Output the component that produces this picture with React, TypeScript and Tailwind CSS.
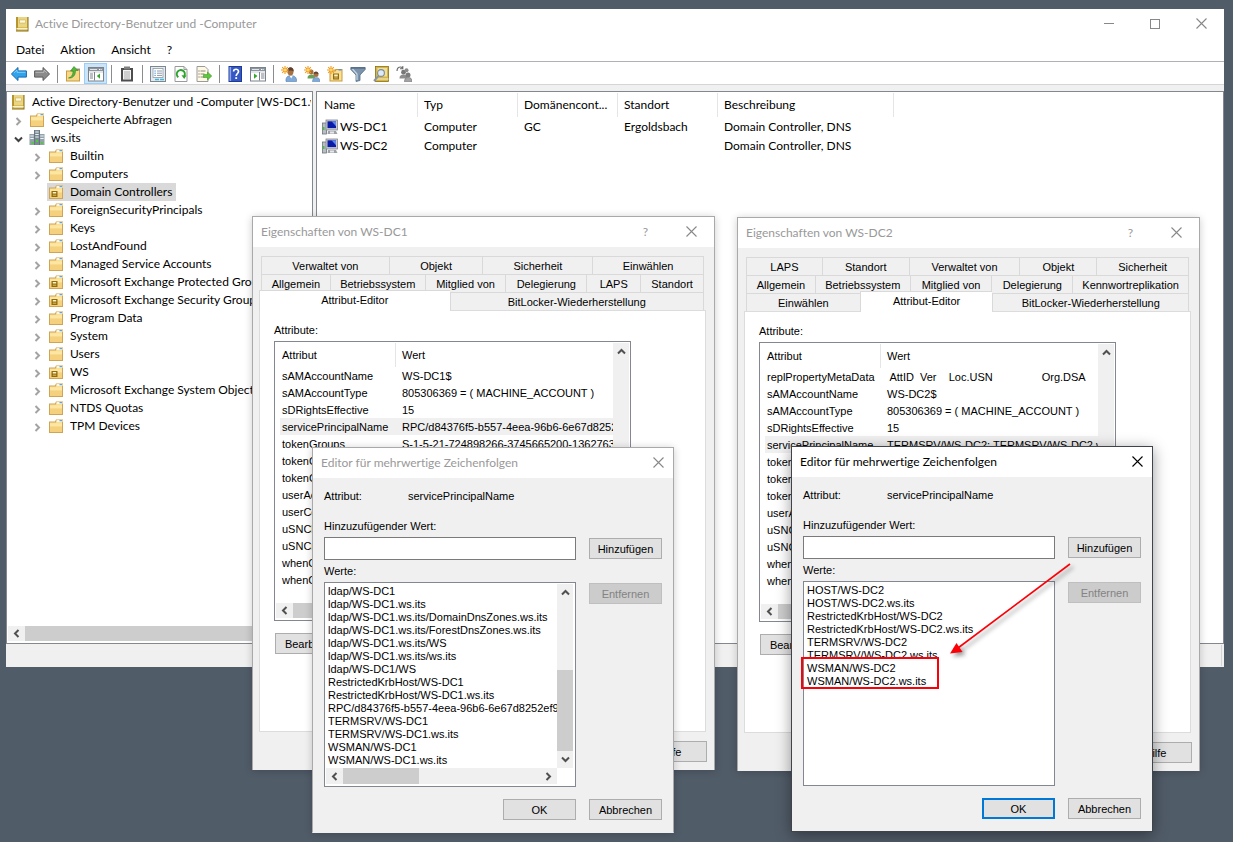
import type { ReactNode } from 'react';

/* ---------- icons ---------- */

function Svg({ children, size = 16 }: { children: ReactNode; size?: number }) {
  return (
    <svg width={size} height={size} viewBox="0 0 16 16" className="shrink-0" aria-hidden="true">
      {children}
    </svg>
  );
}

const BookIcon = () => (
  <Svg>
    <rect x="2" y="1" width="12.500" height="14.500" fill="#8a6d14" />
    <rect x="2" y="1" width="11.500" height="13.500" fill="#d9bd55" />
    <rect x="2" y="1" width="2" height="13.500" fill="#b6952e" />
    <rect x="4" y="1" width="9" height="10" fill="#e9d584" />
    <rect x="5.500" y="4" width="6" height="3" fill="#fdf8e0" stroke="#c9a83f" strokeWidth=".5" />
    <rect x="2.500" y="12" width="11" height="1.400" fill="#f7f1d4" />
  </Svg>
);

const FolderIcon = ({ ou = false }: { ou?: boolean }) => (
  <Svg>
    <path d="M1 3.500h6l1-2h7v13.500H1z" fill="#cfa454" />
    <path d="M2 4.500h6l1-2h5v11.500H2z" fill="#fbdf92" />
    <path d="M8.500 2h6v2h-6z" fill="#fff6d8" />
    <path d="M11.500 2.200h2.500v1h-2.500z" fill="#3f8fe0" />
    <path d="M2 5.500h12v3H2z" fill="#fde6a4" />
    <path d="M2 8.500h12V14H2z" fill="#f5d17e" />
    {ou && (
      <>
        <rect x="3.500" y="7" width="6" height="6" fill="#8f6c10" />
        <rect x="4.800" y="8" width="3.400" height="1.500" fill="#fff3c4" />
        <rect x="4.800" y="10.500" width="3.400" height="1.500" fill="#c9a640" />
      </>
    )}
  </Svg>
);

const DomainIcon = () => (
  <Svg>
    <path d="M5.500 0h5v15h-5z" fill="#7b8a94" />
    <path d="M.5 4h5v11h-5zM10.500 4h5v11h-5z" fill="#93a1aa" />
    <path d="M6.300 2h3.400M6.300 4.500h3.400M1.300 6h3.400M1.300 8.500h3.400M11.300 6h3.400M11.300 8.500h3.400M6.300 7h3.400" stroke="#eef3f5" strokeWidth="1.100" />
    <path d="M5.500 0v15M10.500 0v15" stroke="#55636d" strokeWidth=".8" />
    <path d="M2.500 12h2v2h-2zM7 10h2v2H7zM12 12h2v2h-2z" fill="#45d32c" />
  </Svg>
);

const ComputerIcon = () => (
  <Svg>
    <rect x="0.500" y="4" width="4" height="11" fill="#b9bec4" stroke="#6e747b" strokeWidth=".8" />
    <rect x="1" y="8" width="1.500" height="3" fill="#45c03a" />
    <rect x="4" y="1" width="11.500" height="10" fill="#c9cbd0" stroke="#83868c" strokeWidth=".8" />
    <rect x="5.500" y="2.300" width="8.500" height="6.800" fill="#0a1ba8" />
    <path d="M9.500 2.300h4.500v5z" fill="#5f86ea" />
    <path d="M6 12h8l1.500 3h-10z" fill="#9ea2a8" />
    <path d="M8 12.500h4v2H8z" fill="#e6e8ea" />
  </Svg>
);

const ArrowIcon = ({ forward = false }: { forward?: boolean }) =>
  forward ? (
    <Svg>
      <path d="M15.600 8 9 1.500v3.400H.6v6.200H9v3.400z" fill="#8a8a8a" stroke="#5a5a5a" />
      <path d="M1.500 6.300h8.500V4l3 2.800" fill="none" stroke="#bdbdbd" strokeWidth=".9" />
    </Svg>
  ) : (
    <Svg>
      <path d="M.4 8 7 1.500v3.400h8.400v6.200H7v3.400z" fill="#2fa4ec" stroke="#1668b0" />
      <path d="M14.500 6.300H6V4L3 6.800" fill="none" stroke="#8ad3fb" strokeWidth=".9" />
    </Svg>
  );

const FolderUpIcon = () => (
  <Svg>
    <path d="M1 4.500h6l1-2h7v13H1z" fill="#c99a3f" />
    <path d="M2 5.500h6l1-2h5v11H2z" fill="#f7d888" />
    <path d="M12 3.200h2.500v1.200H12z" fill="#3f8fe0" />
    <path d="M3.500 12C7 11 8.200 8 8 5H5.500L9 .5 12.800 4.500h-2.500C10.800 9 8 12.500 3.500 12z" fill="#52b83a" stroke="#2d7d1e" strokeWidth=".6" />
  </Svg>
);

const PaneIcon = ({ play = false }: { play?: boolean }) => (
  <Svg>
    <rect x=".5" y="1.500" width="15" height="13.500" fill="#fff" stroke="#7b828a" />
    <rect x="1" y="2" width="14" height="3" fill="#8d959e" />
    <path d="M2 3.500h7" stroke="#e3e6e9" />
    <path d="M11 3.500h3" stroke="#fff" strokeDasharray="1 .6" />
    <path d="M1 6h14" stroke="#c9ced3" />
    {play ? (
      <>
        <path d="M9.500 6v8.500M11 8h3.500M11 10h3.500M11 12h3.500" stroke="#7b828a" />
        <path d="M4 7.500 7.500 10 4 12.800z" fill="#34a82a" />
      </>
    ) : (
      <>
        <path d="M6.500 6v8.500M2 8h3M2 10h3M2 12h3" stroke="#7b828a" />
        <path d="M12 7.500 8.800 10l3.200 2.800z" fill="#34a82a" />
      </>
    )}
  </Svg>
);

const ClipboardIcon = () => (
  <Svg>
    <path d="M2 2h12v13.500H2z" fill="#4d4d4d" />
    <rect x="4" y="4" width="8" height="9.500" fill="#f4f4f4" />
    <path d="M5 .5h6v3H5z" fill="#7f7f7f" />
    <path d="M5 6h6M5 8h6M5 10h6M5 12h6" stroke="#9a9a9a" strokeWidth=".8" />
  </Svg>
);

const PropertiesIcon = () => (
  <Svg>
    <rect x=".5" y=".5" width="15" height="15" fill="#e6eaee" stroke="#7d8792" />
    <rect x="3" y="2.500" width="10" height="9" fill="#fff" stroke="#8d99a6" strokeWidth=".8" />
    <path d="M4.500 5h1.200M4.500 7.200h1.200M4.500 9.400h1.200" stroke="#2d7dc8" />
    <path d="M7 5h5M7 7.200h5M7 9.400h5" stroke="#8d99a6" />
    <path d="M5 13.500h4M10 13.500h4" stroke="#43b6de" strokeWidth="1.500" />
  </Svg>
);

const RefreshIcon = () => (
  <Svg>
    <path d="M2 .5h9l3 3v12H2z" fill="#fff" stroke="#9a9a9a" />
    <path d="M11 .5v3h3" fill="none" stroke="#9a9a9a" />
    <path d="M5.300 11.200A4 4 0 1 1 11.300 10" fill="none" stroke="#2aa52a" strokeWidth="2" />
    <path d="m8.500 9.200 5 .2-2.300 3.600z" fill="#2aa52a" />
  </Svg>
);

const ExportIcon = () => (
  <Svg>
    <path d="M1 .5h8l3 3v12H1z" fill="#fff8e2" stroke="#9a9a9a" />
    <path d="M2.500 5h1M2.500 8h1M2.500 11h1" stroke="#555" />
    <path d="M4.500 5h5M4.500 8h4M4.500 11h4" stroke="#8a8a8a" />
    <path d="M7.500 8.500h4V6l4.300 4-4.300 4v-2.500h-4z" fill="#5cc83c" stroke="#328c1f" strokeWidth=".5" />
  </Svg>
);

const HelpIcon = () => (
  <Svg>
    <rect x="2" y=".5" width="12.500" height="15" fill="#3457c4" stroke="#1f3a94" />
    <rect x="2.500" y="1" width="1.600" height="14" fill="#8ea6ea" />
    <path d="M6.600 5.500C6.600 2.500 11.500 2.500 11.500 5.500 11.500 7.500 9.200 7.600 9.200 10" fill="none" stroke="#fff" strokeWidth="1.700" />
    <rect x="8.300" y="11.200" width="1.800" height="1.800" fill="#fff" />
  </Svg>
);

const Spark = () => (
  <>
    <path d="M4 0v8M0 4h8M1.200 1.200l5.600 5.600M6.800 1.200 1.200 6.800" stroke="#f09a1c" strokeWidth="1.100" />
    <circle cx="4" cy="4" r="1.500" fill="#ffd76a" />
  </>
);

const NewUserIcon = () => (
  <Svg>
    <path d="M5 15.500c-.5-4 1.500-6 5-6s6 2 5.500 6z" fill="#7fa9d6" stroke="#5580b0" strokeWidth=".6" />
    <path d="m8.500 9.500 1.700 3 1.700-3z" fill="#fff" />
    <ellipse cx="9.500" cy="5.500" rx="3" ry="4" fill="#a8703f" />
    <path d="M6.500 5C6 0 13 0 12.700 5.500 11 4 9 4.500 6.500 5z" fill="#5c4030" />
    <Spark />
  </Svg>
);

const NewGroupIcon = () => (
  <Svg>
    <path d="M3.500 12.500c0-3 1.500-4 4-4s3.500 1 3.500 4z" fill="#68a257" />
    <circle cx="7.200" cy="6" r="2.400" fill="#a8703f" />
    <path d="M8.500 15.800c0-3 1.300-4.300 3.800-4.300s3.700 1.300 3.700 4.300z" fill="#7fa9d6" stroke="#5580b0" strokeWidth=".5" />
    <circle cx="12" cy="8.500" r="2.500" fill="#a8703f" />
    <path d="M9.500 8c0-3.500 5-3.500 5 0-2-.8-3-.8-5 0z" fill="#5c4030" />
    <Spark />
  </Svg>
);

const NewOuIcon = () => (
  <Svg>
    <path d="M2.500 4.500h5l1-1.500h7v12.500h-13z" fill="#c99a3f" />
    <path d="M3.500 5.500h5l1-1.500h5v10.500h-11z" fill="#fbdf92" />
    <path d="M11.500 3.300h3v1.200h-3z" fill="#3f8fe0" />
    <rect x="6" y="7.500" width="6" height="6" fill="#8f6c10" />
    <rect x="7.200" y="8.500" width="3.600" height="2" fill="#fff3c4" />
    <rect x="7.200" y="11.300" width="3.600" height="1.200" fill="#d6b450" />
    <Spark />
  </Svg>
);

const FunnelIcon = () => (
  <Svg>
    <path d="M.8 1.500h14.400v2L10 9v5.500l-4 1V9L.8 3.500z" fill="#7b93ab" stroke="#56708a" strokeWidth=".8" />
    <path d="M2.500 3 7 8v6" fill="none" stroke="#c9d9e8" strokeWidth="1.200" />
    <path d="M1 2h14" stroke="#4c6178" />
  </Svg>
);

const FindIcon = () => (
  <Svg>
    <rect x="2.500" y=".5" width="13" height="15" fill="#d6b745" stroke="#8a6d14" strokeWidth=".8" />
    <rect x="4.500" y="2" width="9.500" height="8.500" fill="#efdf9c" />
    <path d="M3 13h12.500" stroke="#f7f1d4" />
    <circle cx="8" cy="7" r="3.400" fill="#dcebf7" stroke="#7c8b98" strokeWidth="1.100" />
    <path d="M5.500 9.800 1 15" stroke="#8b95a0" strokeWidth="2" />
  </Svg>
);

const MoveGroupIcon = () => (
  <Svg>
    <path d="M3.500 12.500c0-3 1.500-4 4-4s3.500 1 3.500 4z" fill="#8d8d8d" />
    <circle cx="7.500" cy="6.200" r="2.400" fill="#777" />
    <circle cx="10.500" cy="4.300" r="2" fill="#8a8a8a" />
    <path d="M8.500 15.800c0-3 1.300-4.300 3.800-4.300s3.700 1.300 3.700 4.300z" fill="#a3a3a3" stroke="#6c6c6c" strokeWidth=".6" />
    <circle cx="12" cy="9" r="2.500" fill="#7c7c7c" />
    <path d="M1 5C1 .5 5 .5 6.500 2M6.800 0v2.800H4" fill="none" stroke="#6c6c6c" strokeWidth="1.100" />
  </Svg>
);

const CloseIcon = () => (
  <svg width="11" height="11" viewBox="0 0 11 11" aria-hidden="true">
    <path d="M.5.5l10 10M10.500.5l-10 10" stroke="currentColor" strokeWidth="1.100" fill="none" />
  </svg>
);

function Chevron({ dir, tone = 'text-[#505050]' }: { dir: 'up' | 'down' | 'left' | 'right'; tone?: string }) {
  const d = {
    up: 'M1 6.500 4.500 3 8 6.500',
    down: 'M1 2.500 4.500 6 8 2.500',
    left: 'M6.500 1 3 4.500 6.500 8',
    right: 'M2.500 1 6 4.500 2.500 8',
  }[dir];
  return (
    <svg width="9" height="9" viewBox="0 0 9 9" className={tone} aria-hidden="true">
      <path d={d} fill="none" stroke="currentColor" strokeWidth="2" />
    </svg>
  );
}

/* ---------- scroll bars ---------- */

function ScrollButton({ dir, label }: { dir: 'up' | 'down' | 'left' | 'right'; label: string }) {
  return (
    <button type="button" aria-label={label} className="flex size-[17px] shrink-0 items-center justify-center">
      <Chevron dir={dir} />
    </button>
  );
}

/* ---------- main window ---------- */

type TreeNode = { label: string; level: number; icon: ReactNode; open?: boolean; leaf?: boolean; selected?: boolean };

const tree: TreeNode[] = [
  { label: 'Active Directory-Benutzer und -Computer [WS-DC1.ws.its]', level: 0, icon: <BookIcon /> },
  { label: 'Gespeicherte Abfragen', level: 1, icon: <FolderIcon /> },
  { label: 'ws.its', level: 1, icon: <DomainIcon />, open: true },
  { label: 'Builtin', level: 2, icon: <FolderIcon /> },
  { label: 'Computers', level: 2, icon: <FolderIcon /> },
  { label: 'Domain Controllers', level: 2, icon: <FolderIcon ou />, leaf: true, selected: true },
  { label: 'ForeignSecurityPrincipals', level: 2, icon: <FolderIcon /> },
  { label: 'Keys', level: 2, icon: <FolderIcon /> },
  { label: 'LostAndFound', level: 2, icon: <FolderIcon /> },
  { label: 'Managed Service Accounts', level: 2, icon: <FolderIcon /> },
  { label: 'Microsoft Exchange Protected Groups', level: 2, icon: <FolderIcon ou /> },
  { label: 'Microsoft Exchange Security Groups', level: 2, icon: <FolderIcon ou /> },
  { label: 'Program Data', level: 2, icon: <FolderIcon /> },
  { label: 'System', level: 2, icon: <FolderIcon /> },
  { label: 'Users', level: 2, icon: <FolderIcon /> },
  { label: 'WS', level: 2, icon: <FolderIcon ou /> },
  { label: 'Microsoft Exchange System Objects', level: 2, icon: <FolderIcon /> },
  { label: 'NTDS Quotas', level: 2, icon: <FolderIcon /> },
  { label: 'TPM Devices', level: 2, icon: <FolderIcon /> },
];

function Tree() {
  return (
    <ul role="tree" aria-label="Konsolenstruktur" className="min-h-0 flex-1 overflow-hidden">
      {tree.map((n) => (
        <li
          key={n.label}
          role="treeitem"
          aria-selected={!!n.selected}
          className={n.level === 2 ? 'flex h-[18px] pl-[19px]' : 'flex h-[18px]'}
        >
          {n.level > 0 && (
            <span className="flex w-[19px] shrink-0 items-center justify-center pt-[2px]">
              {!n.leaf && (
                <button type="button" aria-label={`${n.label} umschalten`}>
                  <Chevron dir={n.open ? 'down' : 'right'} tone={n.open ? 'text-[#404040]' : 'text-[#a3a3a3]'} />
                </button>
              )}
            </span>
          )}
          <span
            className={`flex items-center gap-[6px] pr-1 pl-px whitespace-nowrap ${n.selected ? 'bg-[#d9d9d9]' : ''}`}
          >
            {n.icon}
            {n.label}
          </span>
        </li>
      ))}
    </ul>
  );
}

const tools: (null | { label: string; icon: ReactNode; on?: boolean })[] = [
  { label: 'Zurück', icon: <ArrowIcon /> },
  { label: 'Vorwärts', icon: <ArrowIcon forward /> },
  null,
  { label: 'Eine Ebene nach oben', icon: <FolderUpIcon /> },
  { label: 'Konsolenstruktur anzeigen', icon: <PaneIcon />, on: true },
  null,
  { label: 'Einfügen', icon: <ClipboardIcon /> },
  null,
  { label: 'Eigenschaften', icon: <PropertiesIcon /> },
  { label: 'Aktualisieren', icon: <RefreshIcon /> },
  { label: 'Liste exportieren', icon: <ExportIcon /> },
  null,
  { label: 'Hilfe', icon: <HelpIcon /> },
  { label: 'Aktionsbereich anzeigen', icon: <PaneIcon play /> },
  null,
  { label: 'Neuer Benutzer', icon: <NewUserIcon /> },
  { label: 'Neue Gruppe', icon: <NewGroupIcon /> },
  { label: 'Neue Organisationseinheit', icon: <NewOuIcon /> },
  { label: 'Filter', icon: <FunnelIcon /> },
  { label: 'Suchen', icon: <FindIcon /> },
  { label: 'Zu Gruppe hinzufügen', icon: <MoveGroupIcon /> },
];

const columns = ['Name', 'Typ', 'Domänencont...', 'Standort', 'Beschreibung'];
const computers = [
  ['WS-DC1', 'Computer', 'GC', 'Ergoldsbach', 'Domain Controller, DNS'],
  ['WS-DC2', 'Computer', '', '', 'Domain Controller, DNS'],
];

function MainWindow() {
  return (
    <main className="mr-[9px] ml-[6px] bg-white">
      <header className="flex h-[29px] items-center text-[#999]">
        <span className="flex flex-1 items-center gap-[5px] pl-2">
          <BookIcon />
          <h1>Active Directory-Benutzer und -Computer</h1>
        </span>
        <button type="button" aria-label="Minimieren" className="flex w-[46px] justify-center">
          <span className="h-px w-[10px] bg-[#888]" />
        </button>
        <button type="button" aria-label="Maximieren" className="flex w-[46px] justify-center">
          <span className="size-[10px] border border-[#888]" />
        </button>
        <button type="button" aria-label="Schließen" className="flex w-[46px] justify-center text-[#888]">
          <CloseIcon />
        </button>
      </header>
      <nav className="flex h-6 items-center gap-4 border-b border-[#b0b0b8] pl-[10px]">
        <button type="button">Datei</button>
        <button type="button">Aktion</button>
        <button type="button">Ansicht</button>
        <button type="button">?</button>
      </nav>
      <div role="toolbar" className="flex h-[23px] items-end border-b border-[#d5d5d5] pl-px">
        {tools.map((t, i) =>
          t ? (
            <button
              key={t.label}
              type="button"
              aria-label={t.label}
              className={`flex h-[21px] w-[23px] items-center justify-center ${t.on ? 'border border-[#99cdfa] bg-[#cce4f7]' : ''}`}
            >
              {t.icon}
            </button>
          ) : (
            <span key={i} className="flex h-[21px] w-2 items-center justify-center">
              <span className="h-[18px] w-px bg-[#8c8c8c]" />
            </span>
          ),
        )}
      </div>
      <div className="flex gap-[3px] bg-[#f0f0f0] pt-[6px]">
        <section className="flex h-[553px] w-[307px] shrink-0 flex-col border border-[#828790] bg-white px-px pt-px pb-[2px]">
          <div className="flex min-h-0 flex-1 flex-col overflow-hidden pl-px">
            <Tree />
          </div>
          <div className="flex h-[15px] items-center bg-[#f0f0f0]">
            <ScrollButton dir="left" label="Nach links" />
            <span className="h-full flex-1 bg-[#cdcdcd]" />
            <ScrollButton dir="right" label="Nach rechts" />
          </div>
        </section>
        <section className="min-w-0 flex-1 border border-[#828790] bg-white pt-px">
          <table className="w-[577px] table-fixed border-separate border-spacing-0 text-left">
            <colgroup>
              <col className="w-[101px]" />
              <col className="w-[100px]" />
              <col className="w-[100px]" />
              <col className="w-[100px]" />
              <col />
            </colgroup>
            <thead>
              <tr className="h-6">
                {columns.map((c, i) => (
                  <th
                    key={c}
                    className={`border-r border-[#e5e5e5] p-0 font-normal ${i === 0 ? 'pl-[7px]' : 'pl-[6px]'}`}
                  >
                    {c}
                  </th>
                ))}
              </tr>
            </thead>
            <tbody>
              {computers.map((row) => (
                <tr key={row[0]} className="h-[19px]">
                  <td className="p-0 pl-[5px]">
                    <span className="flex items-center gap-[2px]">
                      <ComputerIcon />
                      {row[0]}
                    </span>
                  </td>
                  {row.slice(1).map((cell, i) => (
                    <td key={i} className="p-0 pl-[6px]">
                      {cell}
                    </td>
                  ))}
                </tr>
              ))}
            </tbody>
          </table>
        </section>
      </div>
      <footer className="flex h-[23px] justify-end bg-[#f0f0f0] py-px pr-[2px]">
        <span className="w-px bg-[#d5d5d5]" />
      </footer>
    </main>
  );
}

/* ---------- dialogs ---------- */

const buttonBase =
  'flex h-[21px] items-center justify-center border border-[#adadad] bg-[#e1e1e1] disabled:border-[#bfbfbf] disabled:bg-[#cccccc] disabled:text-[#838383]';

function Button({ children, disabled, primary }: { children: ReactNode; disabled?: boolean; primary?: boolean }) {
  return (
    <button
      type="button"
      disabled={disabled}
      className={
        primary
          ? 'flex h-[21px] w-[73px] items-center justify-center border-2 border-[#0078d7] bg-[#e1e1e1]'
          : `${buttonBase} w-[73px]`
      }
    >
      {children}
    </button>
  );
}

function TitleBar({ title, help, active }: { title: string; help?: boolean; active?: boolean }) {
  return (
    <header
      className={`flex h-[30px] items-center bg-white pl-2 font-['Lato',sans-serif] text-[12px] ${active ? 'text-black' : 'text-[#999]'}`}
    >
      <h2 className="flex-1">{title}</h2>
      {help && (
        <button type="button" aria-label="Hilfe" className="w-[45px] text-center">
          ?
        </button>
      )}
      <button
        type="button"
        aria-label="Schließen"
        className={`flex justify-center pb-px ${help ? 'w-[46px]' : 'w-[30px]'} ${active ? 'text-black' : 'text-[#888]'}`}
      >
        <CloseIcon />
      </button>
    </header>
  );
}

function Tab({ children }: { children: ReactNode }) {
  return (
    <button type="button" role="tab" aria-selected="false" className="border-t border-l border-[#d9d9d9] text-center">
      {children}
    </button>
  );
}

function ActiveTab({ children }: { children: ReactNode }) {
  return (
    <button
      type="button"
      role="tab"
      aria-selected="true"
      className="z-10 -mt-[2px] -mb-px border-t border-l border-[#d9d9d9] bg-white pb-[3px] text-center"
    >
      {children}
    </button>
  );
}

type AttributeRow = { name: string; value?: string; selected?: boolean };

function PropertiesDialog({
  title,
  place,
  tabs,
  rows,
}: {
  title: string;
  place: string;
  tabs: ReactNode;
  rows: AttributeRow[];
}) {
  return (
    <section
      aria-label={title}
      className={`absolute w-[463px] border border-b-0 border-[#a9a9a9] bg-[#f0f0f0] shadow-[0_1px_8px_rgba(0,0,0,0.2)] ${place}`}
    >
      <TitleBar title={title} help />
      <div className="pt-[9px] pr-[8px] pb-2 pl-[6px]">
        <div role="tablist">{tabs}</div>
        <div className="flex flex-col border border-[#dcdcdc] bg-white pt-[11px] pr-[74px] pb-[77px] pl-[14px]">
          <h3 className="h-[19px]">Attribute:</h3>
          <div className="border border-[#828790] bg-white pt-px pr-px pb-[2px] pl-px">
            <div className="flex">
              <div className="h-[260px] min-w-0 flex-1 overflow-hidden pl-1">
                <table className="w-full table-fixed border-separate border-spacing-0 text-left whitespace-pre">
                  <colgroup>
                    <col className="w-[116px]" />
                    <col />
                  </colgroup>
                  <thead>
                    <tr className="h-6">
                      <th className="border-r border-[#e5e5e5] p-0 pl-[2px] font-normal">Attribut</th>
                      <th className="p-0 pl-[6px] font-normal">Wert</th>
                    </tr>
                  </thead>
                  <tbody>
                    {rows.map((r) => (
                      <tr key={r.name} className={`h-[17px] ${r.selected ? 'bg-[#f0f0f0]' : ''}`}>
                        <td className="overflow-hidden p-0 pl-[2px]">{r.name}</td>
                        <td className="overflow-hidden p-0 pl-[6px]">{r.value}</td>
                      </tr>
                    ))}
                  </tbody>
                </table>
              </div>
              <div className="flex w-4 flex-col items-center bg-[#f0f0f0]">
                <ScrollButton dir="up" label="Nach oben" />
              </div>
            </div>
            <div className="flex h-[15px] items-center bg-[#f0f0f0]">
              <ScrollButton dir="left" label="Nach links" />
              <span className="h-full w-[200px] bg-[#cdcdcd]" />
            </div>
          </div>
          <div className="mt-3 pl-px">
            <Button>Bearbeiten</Button>
          </div>
        </div>
        <div className="mt-[9px] -mr-px flex justify-end">
          <Button>Hilfe</Button>
        </div>
      </div>
    </section>
  );
}

function ValueEditor({
  id,
  place,
  active,
  values,
  scroll,
}: {
  id: string;
  place: string;
  active?: boolean;
  values: string[];
  scroll?: boolean;
}) {
  return (
    <section
      aria-label="Editor für mehrwertige Zeichenfolgen"
      className={`absolute w-[362px] border bg-[#f0f0f0] ${active ? 'border-[#3f434a] shadow-[0_3px_14px_rgba(0,0,0,0.4)]' : 'border-[#a9a9a9] border-b-[#f0f0f0] shadow-[0_1px_8px_rgba(0,0,0,0.2)]'} ${place}`}
    >
      <TitleBar title="Editor für mehrwertige Zeichenfolgen" active={active} />
      <div className="flex flex-col px-[11px] pt-[10px] pb-3">
        <dl className="flex h-[30px]">
          <dt className="w-[84px]">Attribut:</dt>
          <dd>servicePrincipalName</dd>
        </dl>
        <label htmlFor={id} className="h-[19px]">
          Hinzuzufügender Wert:
        </label>
        <div className="flex items-center gap-[13px]">
          <input id={id} type="text" className="h-[23px] min-w-0 flex-1 border border-[#7a7a7a] bg-white px-1" />
          <Button>Hinzufügen</Button>
        </div>
        <h3 className="mt-[3px] h-[19px]">Werte:</h3>
        <div className="flex gap-[13px]">
          <div className="h-[205px] min-w-0 flex-1 border border-[#828790] bg-white p-px pr-[2px]">
            <div className="flex">
              <ul
                role="listbox"
                aria-label="Werte"
                className="h-[184px] min-w-0 flex-1 overflow-hidden pt-px pl-[2px] leading-[13px] whitespace-nowrap"
              >
                {values.map((v) => (
                  <li key={v} role="option" aria-selected="false">
                    {v}
                  </li>
                ))}
              </ul>
              {scroll && (
                <div className="flex w-4 flex-col items-center bg-[#f0f0f0]">
                  <ScrollButton dir="up" label="Nach oben" />
                  <span className="flex-1" />
                  <span className="h-[81px] w-full bg-[#cdcdcd]" />
                  <ScrollButton dir="down" label="Nach unten" />
                </div>
              )}
            </div>
            {scroll && (
              <div className="mr-4 flex h-4 items-center bg-[#f0f0f0]">
                <ScrollButton dir="left" label="Nach links" />
                <span className="h-full w-[76px] bg-[#cdcdcd]" />
                <span className="flex-1" />
                <ScrollButton dir="right" label="Nach rechts" />
              </div>
            )}
          </div>
          <div className="pt-px">
            <Button disabled>Entfernen</Button>
          </div>
        </div>
        <div className="mt-3 flex justify-end gap-[13px]">
          <Button primary={active}>OK</Button>
          <Button>Abbrechen</Button>
        </div>
      </div>
    </section>
  );
}

const dc1Rows: AttributeRow[] = [
  { name: 'sAMAccountName', value: 'WS-DC1$' },
  { name: 'sAMAccountType', value: '805306369 = ( MACHINE_ACCOUNT )' },
  { name: 'sDRightsEffective', value: '15' },
  { name: 'servicePrincipalName', value: 'RPC/d84376f5-b557-4eea-96b6-6e67d8252ef9', selected: true },
  { name: 'tokenGroups', value: 'S-1-5-21-724898266-3745665200-13627635' },
  { name: 'tokenGroupsGlobalAndUniversal' },
  { name: 'tokenGroupsNoGCAcceptable' },
  { name: 'userAccountControl' },
  { name: 'userCertificate' },
  { name: 'uSNChanged' },
  { name: 'uSNCreated' },
  { name: 'whenChanged' },
  { name: 'whenCreated' },
];

const dc2Rows: AttributeRow[] = [
  { name: 'replPropertyMetaData', value: ' AttID  Ver    Loc.USN                Org.DSA' },
  { name: 'sAMAccountName', value: 'WS-DC2$' },
  { name: 'sAMAccountType', value: '805306369 = ( MACHINE_ACCOUNT )' },
  { name: 'sDRightsEffective', value: '15' },
  { name: 'servicePrincipalName', value: 'TERMSRV/WS-DC2; TERMSRV/WS-DC2.ws.its', selected: true },
  { name: 'tokenGroups' },
  { name: 'tokenGroupsGlobalAndUniversal' },
  { name: 'tokenGroupsNoGCAcceptable' },
  { name: 'userAccountControl' },
  { name: 'uSNChanged' },
  { name: 'uSNCreated' },
  { name: 'whenChanged' },
  { name: 'whenCreated' },
];

const dc1Values = [
  'ldap/WS-DC1',
  'ldap/WS-DC1.ws.its',
  'ldap/WS-DC1.ws.its/DomainDnsZones.ws.its',
  'ldap/WS-DC1.ws.its/ForestDnsZones.ws.its',
  'ldap/WS-DC1.ws.its/WS',
  'ldap/WS-DC1.ws.its/ws.its',
  'ldap/WS-DC1/WS',
  'RestrictedKrbHost/WS-DC1',
  'RestrictedKrbHost/WS-DC1.ws.its',
  'RPC/d84376f5-b557-4eea-96b6-6e67d8252ef9._msdcs.ws.its',
  'TERMSRV/WS-DC1',
  'TERMSRV/WS-DC1.ws.its',
  'WSMAN/WS-DC1',
  'WSMAN/WS-DC1.ws.its',
];

const dc2Values = [
  'HOST/WS-DC2',
  'HOST/WS-DC2.ws.its',
  'RestrictedKrbHost/WS-DC2',
  'RestrictedKrbHost/WS-DC2.ws.its',
  'TERMSRV/WS-DC2',
  'TERMSRV/WS-DC2.ws.its',
  'WSMAN/WS-DC2',
  'WSMAN/WS-DC2.ws.its',
];

function Annotation() {
  return (
    <>
      <div className="pointer-events-none absolute top-[657px] left-[801px] h-8 w-[138px] border-2 border-[#fb0007]" />
      <svg
        width="140"
        height="110"
        viewBox="0 0 140 110"
        className="pointer-events-none absolute top-[555px] left-[940px] drop-shadow-[3px_3px_2px_rgba(0,0,0,0.4)]"
        aria-hidden="true"
      >
        <path d="M130 9 18 93" stroke="#fb0007" strokeWidth="1.600" />
        <path d="M10 98.500 16.500 88 22.500 97z" fill="#fb0007" />
      </svg>
    </>
  );
}

export default function App() {
  return (
    <div className="relative min-h-screen overflow-hidden bg-[#515c69] pt-[9px] font-['Lato',sans-serif] text-[12px] leading-4 text-black [font-variant-ligatures:none]">
      <MainWindow />
      <div className="font-['Liberation_Sans',Arial,sans-serif] text-[11px] leading-4">
        <PropertiesDialog
          title="Eigenschaften von WS-DC1"
          place="top-[216px] left-[252px]"
          rows={dc1Rows}
          tabs={
            <div className="mx-[2px] grid grid-rows-[18px_18px_18px]">
              <div className="grid grid-cols-[128fr_94fr_110fr_111fr] border-r border-[#d9d9d9]">
                <Tab>Verwaltet von</Tab>
                <Tab>Objekt</Tab>
                <Tab>Sicherheit</Tab>
                <Tab>Einwählen</Tab>
              </div>
              <div className="grid grid-cols-[69fr_95fr_81fr_81fr_54fr_63fr] border-r border-[#d9d9d9]">
                <Tab>Allgemein</Tab>
                <Tab>Betriebssystem</Tab>
                <Tab>Mitglied von</Tab>
                <Tab>Delegierung</Tab>
                <Tab>LAPS</Tab>
                <Tab>Standort</Tab>
              </div>
              <div className="-ml-[2px] grid grid-cols-[191fr_254fr] border-r border-[#d9d9d9]">
                <ActiveTab>Attribut-Editor</ActiveTab>
                <Tab>BitLocker-Wiederherstellung</Tab>
              </div>
            </div>
          }
        />
        <PropertiesDialog
          title="Eigenschaften von WS-DC2"
          place="top-[217px] left-[737px]"
          rows={dc2Rows}
          tabs={
            <div className="mx-[2px] grid grid-rows-[18px_18px_18px]">
              <div className="grid grid-cols-[76fr_87fr_111fr_77fr_92fr] border-r border-[#d9d9d9]">
                <Tab>LAPS</Tab>
                <Tab>Standort</Tab>
                <Tab>Verwaltet von</Tab>
                <Tab>Objekt</Tab>
                <Tab>Sicherheit</Tab>
              </div>
              <div className="grid grid-cols-[69fr_95fr_82fr_81fr_116fr] border-r border-[#d9d9d9]">
                <Tab>Allgemein</Tab>
                <Tab>Betriebssystem</Tab>
                <Tab>Mitglied von</Tab>
                <Tab>Delegierung</Tab>
                <Tab>Kennwortreplikation</Tab>
              </div>
              <div className="grid grid-cols-[114fr_133fr_196fr] border-r border-[#d9d9d9]">
                <Tab>Einwählen</Tab>
                <ActiveTab>Attribut-Editor</ActiveTab>
                <Tab>BitLocker-Wiederherstellung</Tab>
              </div>
            </div>
          }
        />
        <ValueEditor id="dc1-value" place="top-[447px] left-[312px]" values={dc1Values} scroll />
        <ValueEditor id="dc2-value" place="top-[446px] left-[791px]" values={dc2Values} active />
        <Annotation />
      </div>
    </div>
  );
}
